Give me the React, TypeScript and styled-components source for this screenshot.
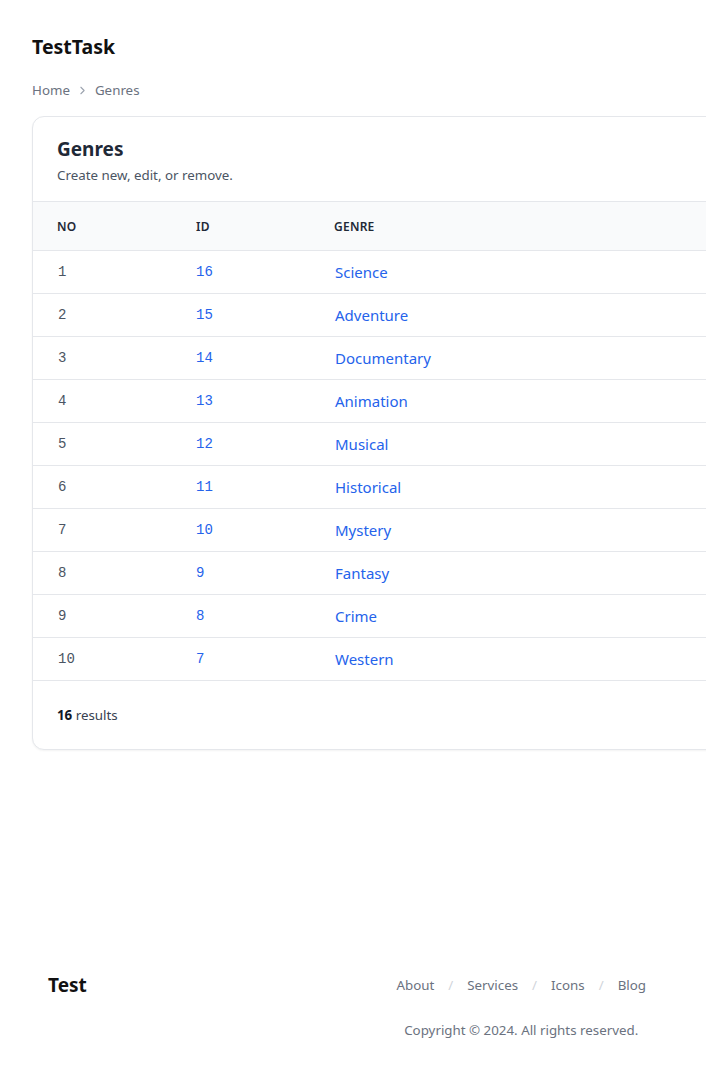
import React from "react";
import styled, { createGlobalStyle } from "styled-components";

const GlobalStyle = createGlobalStyle`
  html, body { margin: 0; padding: 0; }
  body {
    font-family: "Noto Sans", "Open Sans", sans-serif;
    background: #ffffff;
    color: #111827;
    overflow-x: hidden;
  }
  * { box-sizing: border-box; }
`;

const Page = styled.div`
  min-height: 100vh;
  display: flex;
  flex-direction: column;
`;

const Main = styled.main`
  flex: 1;
  padding: 33px 0 0 32px;
`;

const SiteTitle = styled.h1`
  margin: 0;
  font-size: 19.5px;
  font-weight: 700;
  line-height: 28px;
  color: #111111;
`;

const Crumbs = styled.nav`
  display: flex;
  align-items: center;
  gap: 6px;
  margin-top: 19px;
  font-size: 13.33px;
  line-height: 20px;
  color: #6b7280;
`;

const Card = styled.section`
  margin-top: 16px;
  width: 780px;
  border: 1px solid #e5e7eb;
  border-radius: 12px;
  box-shadow: 0 1px 2px rgba(0, 0, 0, 0.05);
  background: #fff;
  overflow: hidden;
`;

const CardHead = styled.header`
  padding: 19px 24px 16px;
  border-bottom: 1px solid #e5e7eb;
`;

const CardTitle = styled.h2`
  margin: 0;
  font-size: 19px;
  font-weight: 700;
  line-height: 26px;
  color: #1f2937;
`;

const CardSub = styled.p`
  margin: 3px 0 0;
  font-size: 13.33px;
  line-height: 20px;
  color: #4b5563;
`;

const Table = styled.table`
  width: 100%;
  border-collapse: collapse;
`;

const Th = styled.th<{ $w?: number }>`
  text-align: left;
  font-size: 12px;
  font-weight: 600;
  letter-spacing: 0.02em;
  text-transform: uppercase;
  color: #1f2937;
  background: #f9fafb;
  height: 48px;
  padding: 1px 0 0 24px;
  width: ${(p) => (p.$w ? `${p.$w}px` : "auto")};
  border-bottom: 1px solid #e5e7eb;
`;

const Td = styled.td<{ $mono?: boolean; $link?: boolean }>`
  height: 43px;
  padding: 0 0 0 24px;
  border-bottom: 1px solid #e5e7eb;
  font-family: ${(p) =>
    p.$mono ? '"Liberation Mono", "DejaVu Sans Mono", monospace' : '"Noto Sans", sans-serif'};
  font-size: ${(p) => (p.$mono ? "14px" : "15px")};
  color: ${(p) => (p.$link ? "#2563eb" : "#4b5563")};
`;

const Inset = styled.span`
  padding-left: 1px;
`;

const CardFoot = styled.div`
  padding: 24px 24px 24px;
  font-size: 13.33px;
  line-height: 20px;
  color: #374151;
  b { color: #111827; font-weight: 700; }
`;

const Footer = styled.footer`
  display: flex;
  justify-content: space-between;
  align-items: flex-start;
  padding: 0 60px 39px 48px;
`;

const FootBrand = styled.div`
  font-size: 19px;
  font-weight: 700;
  line-height: 26px;
  color: #111;
  margin-top: -3px;
`;

const FootRight = styled.div`
  display: flex;
  flex-direction: column;
  align-items: center;
  gap: 25px;
`;

const Links = styled.div`
  display: flex;
  gap: 14px;
  font-size: 13.33px;
  line-height: 20px;
  color: #6b7280;
`;

const Sep = styled.span`
  color: #d1d5db;
`;

const Copy = styled.div`
  font-size: 13.33px;
  line-height: 20px;
  color: #6b7280;
`;

const rows = [
  [1, 16, "Science"],
  [2, 15, "Adventure"],
  [3, 14, "Documentary"],
  [4, 13, "Animation"],
  [5, 12, "Musical"],
  [6, 11, "Historical"],
  [7, 10, "Mystery"],
  [8, 9, "Fantasy"],
  [9, 8, "Crime"],
  [10, 7, "Western"],
] as const;

const Chevron = () => (
  <svg width="13" height="13" viewBox="0 0 24 24" fill="none" stroke="#9ca3af" strokeWidth="2" strokeLinecap="round" strokeLinejoin="round">
    <path d="m9 18 6-6-6-6" />
  </svg>
);

export default function App() {
  return (
    <Page>
      <GlobalStyle />
      <Main>
        <SiteTitle>TestTask</SiteTitle>
        <Crumbs>
          <span>Home</span>
          <Chevron />
          <span>Genres</span>
        </Crumbs>
        <Card>
          <CardHead>
            <CardTitle>Genres</CardTitle>
            <CardSub>Create new, edit, or remove.</CardSub>
          </CardHead>
          <Table>
            <thead>
              <tr>
                <Th $w={139}>No</Th>
                <Th $w={138}>ID</Th>
                <Th>Genre</Th>
              </tr>
            </thead>
            <tbody>
              {rows.map(([n, id, g]) => (
                <tr key={id}>
                  <Td $mono><Inset>{n}</Inset></Td>
                  <Td $mono $link>{id}</Td>
                  <Td $link><Inset>{g}</Inset></Td>
                </tr>
              ))}
            </tbody>
          </Table>
          <CardFoot>
            <b>16</b> results
          </CardFoot>
        </Card>
      </Main>
      <Footer>
        <FootBrand>Test</FootBrand>
        <FootRight>
          <Links>
            <span>About</span>
            <Sep>/</Sep>
            <span>Services</span>
            <Sep>/</Sep>
            <span>Icons</span>
            <Sep>/</Sep>
            <span>Blog</span>
          </Links>
          <Copy>Copyright © 2024. All rights reserved.</Copy>
        </FootRight>
      </Footer>
    </Page>
  );
}
